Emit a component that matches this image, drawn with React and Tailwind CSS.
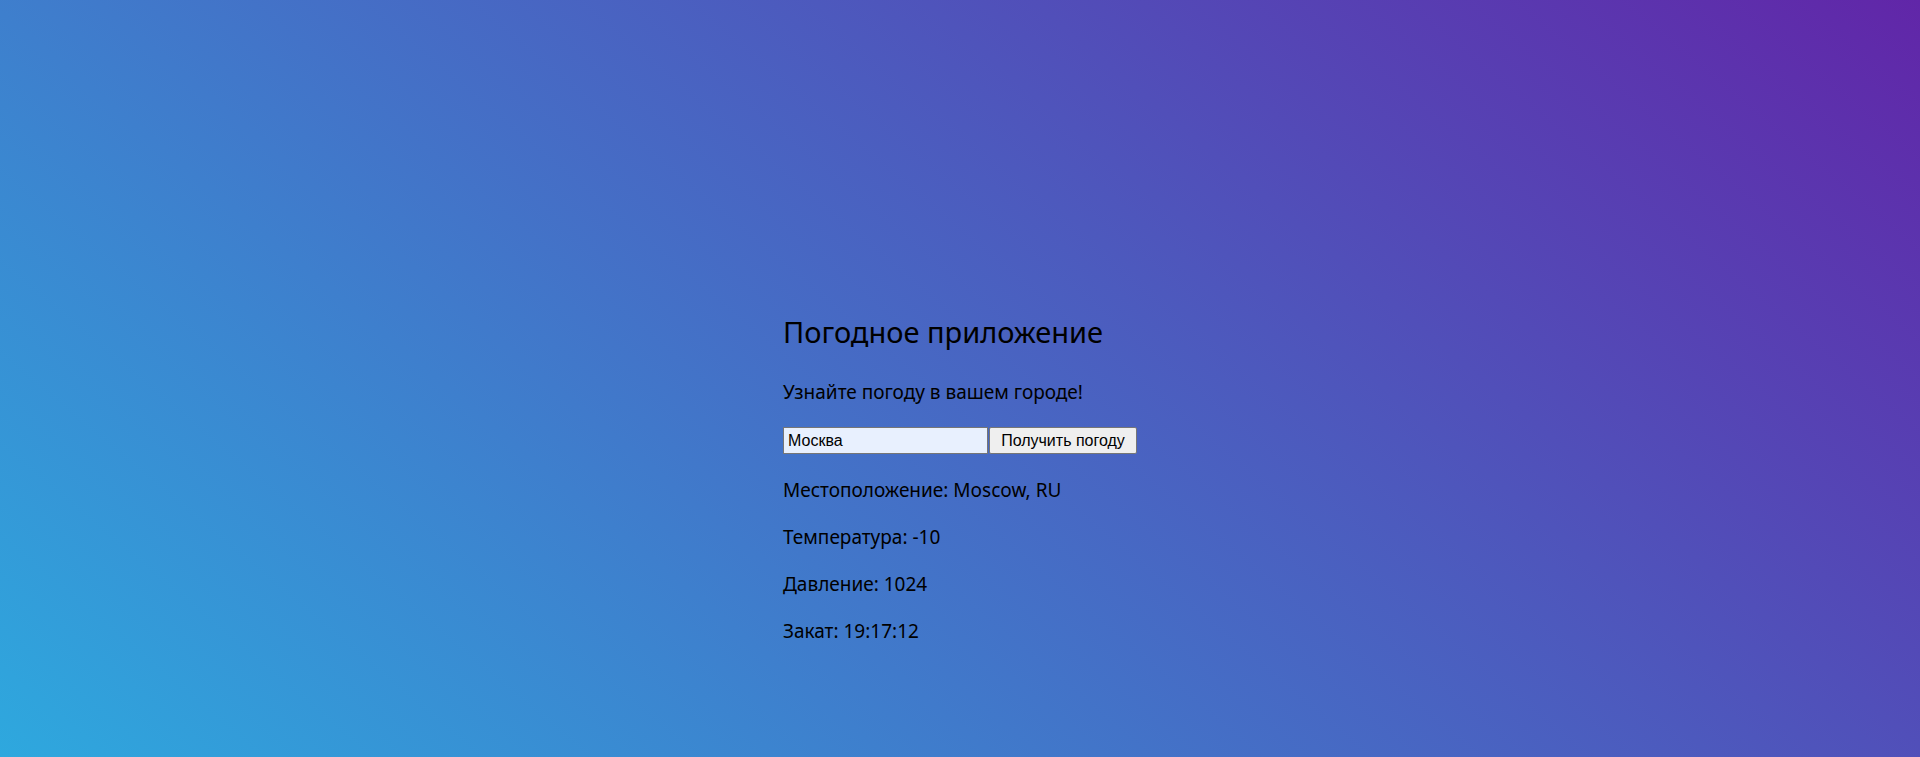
import React, { useState } from 'react';

const weather = [
  { label: 'Местоположение', value: 'Moscow, RU' },
  { label: 'Температура', value: '-10' },
  { label: 'Давление', value: '1024' },
  { label: 'Закат', value: '19:17:12' },
];

const App = () => {
  const [city, setCity] = useState('Москва');

  return (
    <div className="min-h-screen w-full bg-[linear-gradient(40deg,#2ea8de,#6126a8)] font-['Noto_Sans',sans-serif] text-black">
      <div className="flex justify-center pt-[312px]">
        <div>
          <h2 className="text-[29px] leading-[40px] mb-[27px]">Погодное приложение</h2>
          <p className="text-[19px] leading-[26px] mb-[22px]">Узнайте погоду в вашем городе!</p>
          <form className="flex gap-px mb-[23px]" onSubmit={(e) => e.preventDefault()}>
            <input
              type="text"
              value={city}
              onChange={(e) => setCity(e.target.value)}
              className="w-[205px] h-[27px] px-[4px] bg-[#e8f0fe] border border-[#767676] font-['Liberation_Sans',Arial,sans-serif] text-[16px] outline-none"
            />
            <button
              type="submit"
              className="w-[148px] h-[27px] bg-[#efefef] border border-[#767676] rounded-[2px] font-['Liberation_Sans',Arial,sans-serif] text-[16px]"
            >
              Получить погоду
            </button>
          </form>
          <div className="flex flex-col gap-[21px] text-[19px] leading-[26px]">
            {weather.map((w) => (
              <p key={w.label}>
                {w.label}: {w.value}
              </p>
            ))}
          </div>
        </div>
      </div>
    </div>
  );
};

export default App;
